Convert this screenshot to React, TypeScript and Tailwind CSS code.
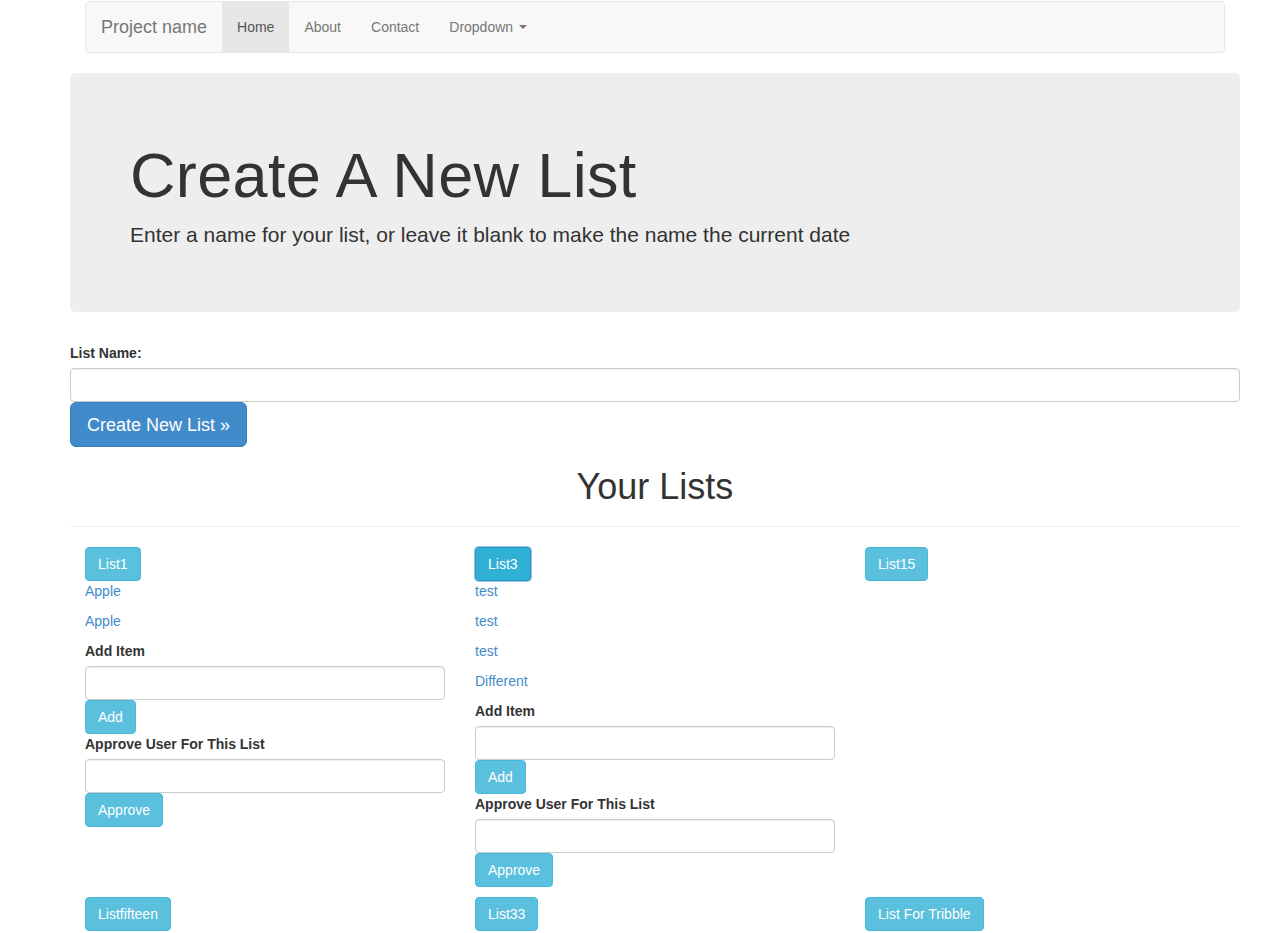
import React from "react";

const font = "font-['Liberation_Sans',Arial,Helvetica,sans-serif]";

function InfoBtn({ children, focused }: { children: React.ReactNode; focused?: boolean }) {
  return (
    <button
      className={
        focused
          ? "h-[34px] px-3 rounded-[4px] border border-[#269abc] bg-[#31b0d5] text-white text-[14px] leading-5 shadow-[0_0_0_1px_#9dbdf5]"
          : "h-[34px] px-3 rounded-[4px] border border-[#46b8da] bg-[#5bc0de] text-white text-[14px] leading-5"
      }
    >
      {children}
    </button>
  );
}

function Input() {
  return (
    <input
      type="text"
      className="block w-full h-[34px] px-3 rounded-[4px] border border-[#ccc] bg-white shadow-[inset_0_1px_1px_rgba(0,0,0,0.075)] outline-none"
    />
  );
}

function ListCol({ name, items, focused, full }: { name: string; items: string[]; focused?: boolean; full?: boolean }) {
  return (
    <div className="px-[15px]">
      <InfoBtn focused={focused}>{name}</InfoBtn>
      {full && (
        <>
          <div>
            {items.map((it, i) => (
              <p key={i} className="mb-[10px] leading-5">
                <a className="text-[#428bca]" href="#">{it}</a>
              </p>
            ))}
          </div>
          <label className="block font-bold leading-5 mb-[5px]">Add Item</label>
          <Input />
          <InfoBtn>Add</InfoBtn>
          <label className="block font-bold leading-5 mb-[5px]">Approve User For This List</label>
          <Input />
          <InfoBtn>Approve</InfoBtn>
        </>
      )}
    </div>
  );
}

export default function App() {
  return (
    <div className={`${font} text-[14px] leading-5 text-[#333] bg-white min-h-[933px]`}>
      <div className="ml-[70px] w-[1170px] pt-px">
        {/* Navbar */}
        <nav className="mx-[15px] h-[52px] border border-[#e7e7e7] bg-[#f8f8f8] rounded-[4px] flex items-stretch">
          <a href="#" className="px-[15px] flex items-center text-[18px] text-[#777]">Project name</a>
          <a href="#" className="px-[15px] flex items-center bg-[#e7e7e7] text-[#555]">Home</a>
          <a href="#" className="px-[15px] flex items-center text-[#777]">About</a>
          <a href="#" className="px-[15px] flex items-center text-[#777]">Contact</a>
          <a href="#" className="px-[15px] flex items-center text-[#777]">
            Dropdown
            <span className="ml-[6px] w-0 h-0 border-t-[4px] border-t-[#777] border-x-[4px] border-x-transparent"></span>
          </a>
        </nav>

        {/* Jumbotron */}
        <div className="mt-[20px] bg-[#eee] rounded-[6px] px-[60px] pt-[48px] pb-[48px]">
          <h1 className="mt-[20px] mb-[10px] text-[63px] leading-[69px] font-normal tracking-[0.35px]">Create A New List</h1>
          <p className="text-[21px] leading-[30px] mb-[14px]">Enter a name for your list, or leave it blank to make the name the current date</p>
        </div>

        {/* Form */}
        <div className="mt-[31px]">
          <label className="block font-bold leading-5 mb-[5px]">List Name:</label>
          <Input />
          <button className="h-[45px] px-4 rounded-[6px] border border-[#357ebd] bg-[#428bca] text-white text-[18px] leading-6">
            Create New List »
          </button>
        </div>

        {/* Your Lists */}
        <div className="border-b border-[#eee] pb-[9px] mb-[20px]">
          <h1 className="mt-[20px] mb-[10px] text-[36px] leading-[40px] text-center font-normal">Your Lists</h1>
        </div>

        <div className="grid grid-cols-3 items-start">
          <ListCol name="List1" items={["Apple", "Apple"]} full />
          <ListCol name="List3" items={["test", "test", "test", "Different"]} focused full />
          <ListCol name="List15" items={[]} />
        </div>
        <div className="grid grid-cols-3 mt-[10px]">
          <ListCol name="Listfifteen" items={[]} />
          <ListCol name="List33" items={[]} />
          <ListCol name="List For Tribble" items={[]} />
        </div>
      </div>
    </div>
  );
}
